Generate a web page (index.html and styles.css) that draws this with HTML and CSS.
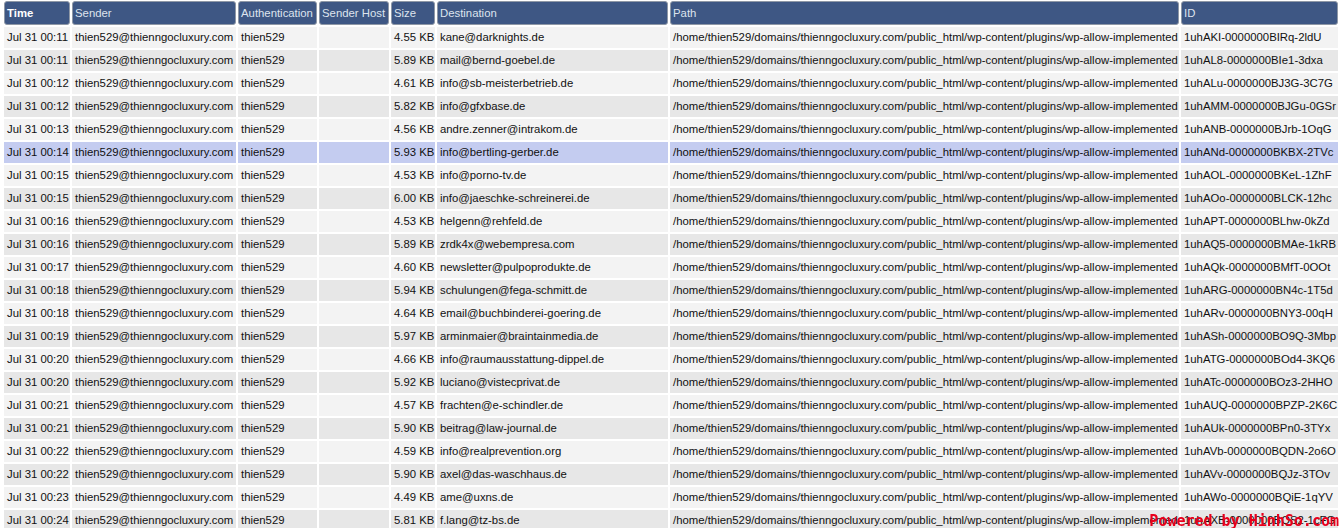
FILE: index.html
```html
<!DOCTYPE html>
<html>
<head>
<meta charset="utf-8">
<link rel="stylesheet" href="styles.css">
</head>
<body>
<table class="log">
<colgroup>
<col class="c-time"><col class="c-sender"><col class="c-auth"><col class="c-host"><col class="c-size"><col class="c-dest"><col class="c-path"><col class="c-id">
</colgroup>
<thead>
<tr><th class="sorted">Time</th><th>Sender</th><th>Authentication</th><th>Sender Host</th><th>Size</th><th>Destination</th><th>Path</th><th>ID</th></tr>
</thead>
<tbody>
<tr><td>Jul 31 00:11</td><td>thien529@thienngocluxury.com</td><td>thien529</td><td></td><td>4.55 KB</td><td>kane@darknights.de</td><td>/home/thien529/domains/thienngocluxury.com/public_html/wp-content/plugins/wp-allow-implemented</td><td>1uhAKI-0000000BIRq-2ldU</td></tr>
<tr><td>Jul 31 00:11</td><td>thien529@thienngocluxury.com</td><td>thien529</td><td></td><td>5.89 KB</td><td>mail@bernd-goebel.de</td><td>/home/thien529/domains/thienngocluxury.com/public_html/wp-content/plugins/wp-allow-implemented</td><td>1uhAL8-0000000BIe1-3dxa</td></tr>
<tr><td>Jul 31 00:12</td><td>thien529@thienngocluxury.com</td><td>thien529</td><td></td><td>4.61 KB</td><td>info@sb-meisterbetrieb.de</td><td>/home/thien529/domains/thienngocluxury.com/public_html/wp-content/plugins/wp-allow-implemented</td><td>1uhALu-0000000BJ3G-3C7G</td></tr>
<tr><td>Jul 31 00:12</td><td>thien529@thienngocluxury.com</td><td>thien529</td><td></td><td>5.82 KB</td><td>info@gfxbase.de</td><td>/home/thien529/domains/thienngocluxury.com/public_html/wp-content/plugins/wp-allow-implemented</td><td>1uhAMM-0000000BJGu-0GSr</td></tr>
<tr><td>Jul 31 00:13</td><td>thien529@thienngocluxury.com</td><td>thien529</td><td></td><td>4.56 KB</td><td>andre.zenner@intrakom.de</td><td>/home/thien529/domains/thienngocluxury.com/public_html/wp-content/plugins/wp-allow-implemented</td><td>1uhANB-0000000BJrb-1OqG</td></tr>
<tr class="selected"><td>Jul 31 00:14</td><td>thien529@thienngocluxury.com</td><td>thien529</td><td></td><td>5.93 KB</td><td>info@bertling-gerber.de</td><td>/home/thien529/domains/thienngocluxury.com/public_html/wp-content/plugins/wp-allow-implemented</td><td>1uhANd-0000000BKBX-2TVc</td></tr>
<tr><td>Jul 31 00:15</td><td>thien529@thienngocluxury.com</td><td>thien529</td><td></td><td>4.53 KB</td><td>info@porno-tv.de</td><td>/home/thien529/domains/thienngocluxury.com/public_html/wp-content/plugins/wp-allow-implemented</td><td>1uhAOL-0000000BKeL-1ZhF</td></tr>
<tr><td>Jul 31 00:15</td><td>thien529@thienngocluxury.com</td><td>thien529</td><td></td><td>6.00 KB</td><td>info@jaeschke-schreinerei.de</td><td>/home/thien529/domains/thienngocluxury.com/public_html/wp-content/plugins/wp-allow-implemented</td><td>1uhAOo-0000000BLCK-12hc</td></tr>
<tr><td>Jul 31 00:16</td><td>thien529@thienngocluxury.com</td><td>thien529</td><td></td><td>4.53 KB</td><td>helgenn@rehfeld.de</td><td>/home/thien529/domains/thienngocluxury.com/public_html/wp-content/plugins/wp-allow-implemented</td><td>1uhAPT-0000000BLhw-0kZd</td></tr>
<tr><td>Jul 31 00:16</td><td>thien529@thienngocluxury.com</td><td>thien529</td><td></td><td>5.89 KB</td><td>zrdk4x@webempresa.com</td><td>/home/thien529/domains/thienngocluxury.com/public_html/wp-content/plugins/wp-allow-implemented</td><td>1uhAQ5-0000000BMAe-1kRB</td></tr>
<tr><td>Jul 31 00:17</td><td>thien529@thienngocluxury.com</td><td>thien529</td><td></td><td>4.60 KB</td><td>newsletter@pulpoprodukte.de</td><td>/home/thien529/domains/thienngocluxury.com/public_html/wp-content/plugins/wp-allow-implemented</td><td>1uhAQk-0000000BMfT-0OOt</td></tr>
<tr><td>Jul 31 00:18</td><td>thien529@thienngocluxury.com</td><td>thien529</td><td></td><td>5.94 KB</td><td>schulungen@fega-schmitt.de</td><td>/home/thien529/domains/thienngocluxury.com/public_html/wp-content/plugins/wp-allow-implemented</td><td>1uhARG-0000000BN4c-1T5d</td></tr>
<tr><td>Jul 31 00:18</td><td>thien529@thienngocluxury.com</td><td>thien529</td><td></td><td>4.64 KB</td><td>email@buchbinderei-goering.de</td><td>/home/thien529/domains/thienngocluxury.com/public_html/wp-content/plugins/wp-allow-implemented</td><td>1uhARv-0000000BNY3-00qH</td></tr>
<tr><td>Jul 31 00:19</td><td>thien529@thienngocluxury.com</td><td>thien529</td><td></td><td>5.97 KB</td><td>arminmaier@braintainmedia.de</td><td>/home/thien529/domains/thienngocluxury.com/public_html/wp-content/plugins/wp-allow-implemented</td><td>1uhASh-0000000BO9Q-3Mbp</td></tr>
<tr><td>Jul 31 00:20</td><td>thien529@thienngocluxury.com</td><td>thien529</td><td></td><td>4.66 KB</td><td>info@raumausstattung-dippel.de</td><td>/home/thien529/domains/thienngocluxury.com/public_html/wp-content/plugins/wp-allow-implemented</td><td>1uhATG-0000000BOd4-3KQ6</td></tr>
<tr><td>Jul 31 00:20</td><td>thien529@thienngocluxury.com</td><td>thien529</td><td></td><td>5.92 KB</td><td>luciano@vistecprivat.de</td><td>/home/thien529/domains/thienngocluxury.com/public_html/wp-content/plugins/wp-allow-implemented</td><td>1uhATc-0000000BOz3-2HHO</td></tr>
<tr><td>Jul 31 00:21</td><td>thien529@thienngocluxury.com</td><td>thien529</td><td></td><td>4.57 KB</td><td>frachten@e-schindler.de</td><td>/home/thien529/domains/thienngocluxury.com/public_html/wp-content/plugins/wp-allow-implemented</td><td>1uhAUQ-0000000BPZP-2K6C</td></tr>
<tr><td>Jul 31 00:21</td><td>thien529@thienngocluxury.com</td><td>thien529</td><td></td><td>5.90 KB</td><td>beitrag@law-journal.de</td><td>/home/thien529/domains/thienngocluxury.com/public_html/wp-content/plugins/wp-allow-implemented</td><td>1uhAUk-0000000BPn0-3TYx</td></tr>
<tr><td>Jul 31 00:22</td><td>thien529@thienngocluxury.com</td><td>thien529</td><td></td><td>4.59 KB</td><td>info@realprevention.org</td><td>/home/thien529/domains/thienngocluxury.com/public_html/wp-content/plugins/wp-allow-implemented</td><td>1uhAVb-0000000BQDN-2o6O</td></tr>
<tr><td>Jul 31 00:22</td><td>thien529@thienngocluxury.com</td><td>thien529</td><td></td><td>5.90 KB</td><td>axel@das-waschhaus.de</td><td>/home/thien529/domains/thienngocluxury.com/public_html/wp-content/plugins/wp-allow-implemented</td><td>1uhAVv-0000000BQJz-3TOv</td></tr>
<tr><td>Jul 31 00:23</td><td>thien529@thienngocluxury.com</td><td>thien529</td><td></td><td>4.49 KB</td><td>ame@uxns.de</td><td>/home/thien529/domains/thienngocluxury.com/public_html/wp-content/plugins/wp-allow-implemented</td><td>1uhAWo-0000000BQiE-1qYV</td></tr>
<tr><td>Jul 31 00:24</td><td>thien529@thienngocluxury.com</td><td>thien529</td><td></td><td>5.81 KB</td><td>f.lang@tz-bs.de</td><td>/home/thien529/domains/thienngocluxury.com/public_html/wp-content/plugins/wp-allow-implemented</td><td>1uhAXB-0000000BQS2-1cFG</td></tr>
</tbody>
</table>
<div class="watermark">Powered by HinhSo.com</div>
</body>
</html>
```
FILE: styles.css
```css
html, body {
  margin: 0;
  padding: 0;
  background: #ffffff;
}
body {
  font-family: "Liberation Sans", Arial, sans-serif;
  font-size: 11.35px;
  color: #111111;
}
.log {
  border-collapse: separate;
  border-spacing: 2px;
  margin: -1px 0 0 2px;
  white-space: nowrap;
  table-layout: fixed;
  width: 1338px;
}
.c-time { width: 66px; }
.c-sender { width: 164px; }
.c-auth { width: 79px; }
.c-host { width: 70px; }
.c-size { width: 44px; }
.c-dest { width: 231px; }
.c-path { width: 509px; }
.c-id { width: 157px; }
.log th,
.log td {
  box-sizing: border-box;
  overflow: hidden;
}
.log th {
  background: #3e5784;
  color: #dde4ee;
  font-weight: normal;
  text-align: left;
  border: 1px solid #8f98a6;
  border-radius: 3px;
  padding: 5px 1px 5px 2px;
  line-height: 12px;
}
.log th.sorted {
  font-weight: bold;
  color: #ffffff;
}
.log td {
  padding: 4px 1px 4px 3px;
  line-height: 13px;
  background: #f3f3f3;
}
.log tbody tr:nth-child(even) td {
  background: #e7e7e7;
}
.log tbody tr.selected td {
  background: #c4ccf0;
}
.watermark {
  position: fixed;
  right: 2px;
  bottom: -2px;
  font-family: "DejaVu Sans Mono", monospace;
  font-size: 15px;
  font-weight: bold;
  color: #e8001c;
}
```
